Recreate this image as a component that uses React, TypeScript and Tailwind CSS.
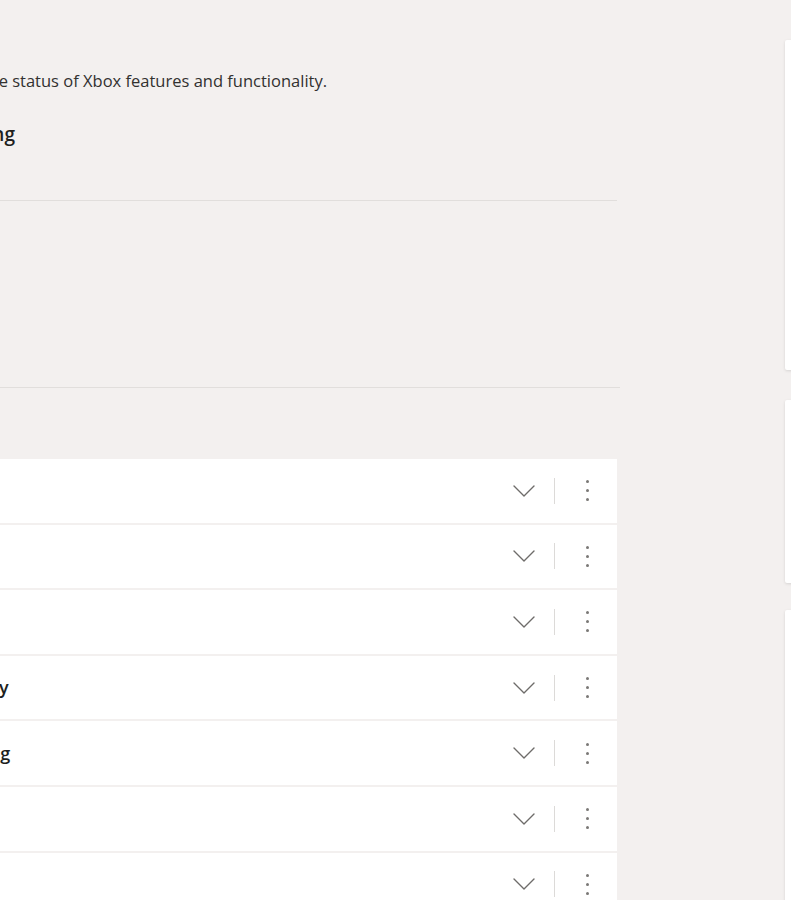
type Service = {
  name: string;
};

const services: Service[] = [
  { name: "Account & profile" },
  { name: "Store & subscriptions" },
  { name: "Games & apps" },
  { name: "Friends & social activity" },
  { name: "Devices & cloud gaming" },
  { name: "Cloud gaming" },
  { name: "Party chat" },
];

const Chevron = () => (
  <svg width="24" height="14" viewBox="0 0 24 14" fill="none">
    <polyline
      points="2,2 12,12 22,2"
      stroke="#6e6c6a"
      strokeWidth="1.4"
      strokeLinecap="round"
      strokeLinejoin="round"
    />
  </svg>
);

const ServiceRow = ({ service }: { service: Service }) => {
  return (
    <div className="flex h-[63.6px] items-center bg-white pl-[45px] pr-[28px]">
      <span className="flex-1 text-[18px] font-semibold text-[#201f1e] whitespace-nowrap">
        {service.name}
      </span>
      <Chevron />
      <div className="ml-[18px] mr-[30px] h-[26px] w-px bg-[#dcdad8]" />
      <div className="flex w-[4px] flex-col items-center gap-[6px]">
        <span className="h-[3px] w-[3px] rounded-full bg-[#7a7876]" />
        <span className="h-[3px] w-[3px] rounded-full bg-[#7a7876]" />
        <span className="h-[3px] w-[3px] rounded-full bg-[#7a7876]" />
      </div>
    </div>
  );
};

const App = () => {
  return (
    <div
      className="flex h-[900px] w-full overflow-hidden bg-[#f3f0ef]"
      style={{ fontFamily: '"Open Sans", "Noto Sans", sans-serif' }}
    >
      <main className="ml-[-240px] w-[857px] shrink-0 pt-[69px]">
        <header className="pl-[172px]">
          <p className="text-[16.5px] leading-[24px] text-[#323130]">
            Check the status of Xbox features and functionality.
          </p>
          <h2 className="mt-[28px] ml-[-131px] text-[19px] font-semibold leading-[26px] text-[#201f1e]">
            All services are running
          </h2>
        </header>
        <div className="mt-[53px] h-px bg-[#e1dedc]" />
        <div className="h-[186px]" />
        <div className="mr-[-3px] h-px bg-[#e1dedc]" />
        <div className="mt-[71px] flex flex-col gap-[2px]">
          {services.map((s) => (
            <ServiceRow key={s.name} service={s} />
          ))}
        </div>
      </main>
      <aside className="ml-[168px] flex w-[300px] shrink-0 flex-col pt-[40px]">
        <div className="h-[330px] shrink-0 rounded-[2px] bg-white shadow-[0_1px_3px_rgba(0,0,0,0.12)]" />
        <div className="mt-[30px] h-[183px] shrink-0 rounded-[2px] bg-white shadow-[0_1px_3px_rgba(0,0,0,0.12)]" />
        <div className="mt-[27px] h-[400px] shrink-0 rounded-[2px] bg-white shadow-[0_1px_3px_rgba(0,0,0,0.12)]" />
      </aside>
    </div>
  );
};

export default App;
